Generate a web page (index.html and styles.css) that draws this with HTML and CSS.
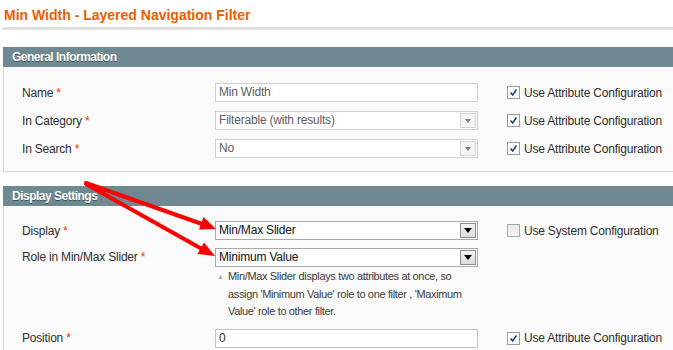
FILE: index.html
```html
<!DOCTYPE html>
<html>
<head>
<meta charset="utf-8">
<link rel="stylesheet" href="styles.css">
</head>
<body>
<div class="page">
  <h1 class="title">Min Width - Layered Navigation Filter</h1>
  <div class="rule"></div>

  <section class="section">
    <div class="head">General Information</div>
    <div class="body b1">
      <div class="row">
        <div class="label">Name <span class="req">*</span></div>
        <div class="input dis">Min Width</div>
        <div class="use"><span class="cb on"><svg viewBox="0 0 13 13" width="13" height="13"><path d="M3 6.5 L5.5 9.5 L10 3" fill="none" stroke="#1e3a78" stroke-width="1.8"/></svg></span>Use Attribute Configuration</div>
      </div>
      <div class="row">
        <div class="label">In Category <span class="req">*</span></div>
        <div class="input select dis">Filterable (with results)<span class="btn"><span class="tri"></span></span></div>
        <div class="use"><span class="cb on"><svg viewBox="0 0 13 13" width="13" height="13"><path d="M3 6.5 L5.5 9.5 L10 3" fill="none" stroke="#1e3a78" stroke-width="1.8"/></svg></span>Use Attribute Configuration</div>
      </div>
      <div class="row">
        <div class="label">In Search <span class="req">*</span></div>
        <div class="input select dis">No<span class="btn"><span class="tri"></span></span></div>
        <div class="use"><span class="cb on"><svg viewBox="0 0 13 13" width="13" height="13"><path d="M3 6.5 L5.5 9.5 L10 3" fill="none" stroke="#1e3a78" stroke-width="1.8"/></svg></span>Use Attribute Configuration</div>
      </div>
    </div>
  </section>

  <section class="section s2">
    <div class="head">Display Settings</div>
    <div class="body b2">
      <div class="row">
        <div class="label">Display <span class="req">*</span></div>
        <div class="input select act">Min/Max Slider<span class="btn"><span class="tri"></span></span></div>
        <div class="use"><span class="cb off"></span>Use System Configuration</div>
      </div>
      <div class="row r-role">
        <div class="label">Role in Min/Max Slider <span class="req">*</span></div>
        <div class="fieldcol">
          <div class="input select act">Minimum Value<span class="btn"><span class="tri"></span></span></div>
          <div class="note">
            <span class="line"><span class="ntri">&#9650;</span>Min/Max Slider displays two attributes at once, so</span>
            <span class="line">assign 'Minimum Value' role to one filter , 'Maximum</span>
            <span class="line">Value' role to other filter.</span>
          </div>
        </div>
      </div>
      <div class="row">
        <div class="label">Position <span class="req">*</span></div>
        <div class="input">0</div>
        <div class="use"><span class="cb on"><svg viewBox="0 0 13 13" width="13" height="13"><path d="M3 6.5 L5.5 9.5 L10 3" fill="none" stroke="#1e3a78" stroke-width="1.8"/></svg></span>Use Attribute Configuration</div>
      </div>
    </div>
  </section>

  <svg class="arrows" width="673" height="350" viewBox="0 0 673 350">
    <line x1="86" y1="183" x2="202" y2="224" stroke="#f00" stroke-width="4" stroke-linecap="round"/>
    <polygon points="216,229 199,229.5 203.5,217" fill="#f00"/>
    <line x1="86" y1="184" x2="202" y2="249" stroke="#f00" stroke-width="4" stroke-linecap="round"/>
    <polygon points="215,256 197.5,254 204,242.5" fill="#f00"/>
  </svg>
</div>
</body>
</html>
```

FILE: styles.css
```css
html, body {
  margin: 0;
  padding: 0;
  background: #fff;
  overflow: hidden;
}

.page {
  position: relative;
  width: 673px;
  height: 350px;
  overflow: hidden;
  font-family: "Liberation Sans", Arial, sans-serif;
  font-size: 12px;
  letter-spacing: -0.2px;
  color: #2f2f2f;
}

.title {
  margin: 0;
  padding: 6px 0 0 4px;
  font-size: 14px;
  line-height: 18px;
  font-weight: bold;
  letter-spacing: 0;
  color: #eb5e00;
}

.rule {
  margin: 3px 0 17px 2px;
  height: 3px;
  background: #dfdfdf;
}

.section {
  margin-left: 3px;
  width: 720px;
}

.s2 {
  margin-top: 14px;
}

.head {
  height: 20px;
  line-height: 20px;
  padding-left: 9px;
  background: #6f8992;
  color: #fff;
  font-weight: bold;
  font-size: 12px;
  letter-spacing: -0.5px;
  text-shadow: 0 1px 0 #3f545b;
}

.body {
  background: #fafafa;
  border: 1px solid #d6d6d6;
  border-top: none;
  padding: 16px 0 13px 18px;
  display: flex;
  flex-direction: column;
}

.b1 { gap: 9px; }
.b2 { gap: 8px; padding-top: 15px; }

.row {
  display: grid;
  grid-template-columns: 193px 263px auto;
  align-items: center;
}

.r-role {
  align-items: start;
}

.r-role .label {
  line-height: 19px;
}

.label .req {
  color: #eb340a;
}

.input {
  position: relative;
  box-sizing: border-box;
  height: 19px;
  line-height: 17px;
  padding-left: 3px;
  background: #fff;
  border: 1px solid #c4c4c4;
  color: #2f2f2f;
  white-space: nowrap;
}

.input.dis {
  color: #606060;
  border-color: #cfcfcf;
}

.input.act {
  color: #111;
  border-color: #a8a8a8;
}

.btn {
  position: absolute;
  right: 1px;
  top: 1px;
  width: 16px;
  height: 15px;
  box-sizing: border-box;
  border: 1px solid #b8b8b8;
  background: linear-gradient(#f2f2f2, #dcdcdc);
  display: flex;
  align-items: center;
  justify-content: center;
}

.dis .btn {
  border-color: #d4d4d4;
  background: #f4f4f4;
}

.act .btn {
  border-color: #8c8c8c;
}

.tri {
  width: 0;
  height: 0;
  border-left: 4px solid transparent;
  border-right: 4px solid transparent;
  border-top: 5px solid #000;
}

.dis .tri {
  border-top-color: #7a7a7a;
  border-left-width: 3.5px;
  border-right-width: 3.5px;
  border-top-width: 4px;
}

.use {
  display: flex;
  align-items: center;
  gap: 4px;
  margin-left: 29px;
  color: #2f2f2f;
  white-space: nowrap;
}

.cb {
  box-sizing: border-box;
  width: 13px;
  height: 13px;
  border: 1px solid #9a9a9a;
  background: #fff;
  display: flex;
  align-items: center;
  justify-content: center;
}

.cb svg {
  display: block;
  width: 11px;
  height: 11px;
}

.cb.off {
  background: linear-gradient(#e9e9e9, #f6f6f6);
  border-color: #a9a9a9;
}

.fieldcol {
  display: flex;
  flex-direction: column;
}

.note {
  margin: 1px 0 0 0;
  font-size: 11px;
  letter-spacing: -0.35px;
  line-height: 17.5px;
  color: #3c3c3c;
}

.note .line {
  display: block;
  padding-left: 13px;
  white-space: nowrap;
}

.ntri {
  display: inline-block;
  width: 11px;
  margin-left: -11px;
  font-size: 7px;
  color: #a8a8a8;
  vertical-align: 1px;
}

.arrows {
  position: absolute;
  left: 0;
  top: 0;
  pointer-events: none;
}
```
